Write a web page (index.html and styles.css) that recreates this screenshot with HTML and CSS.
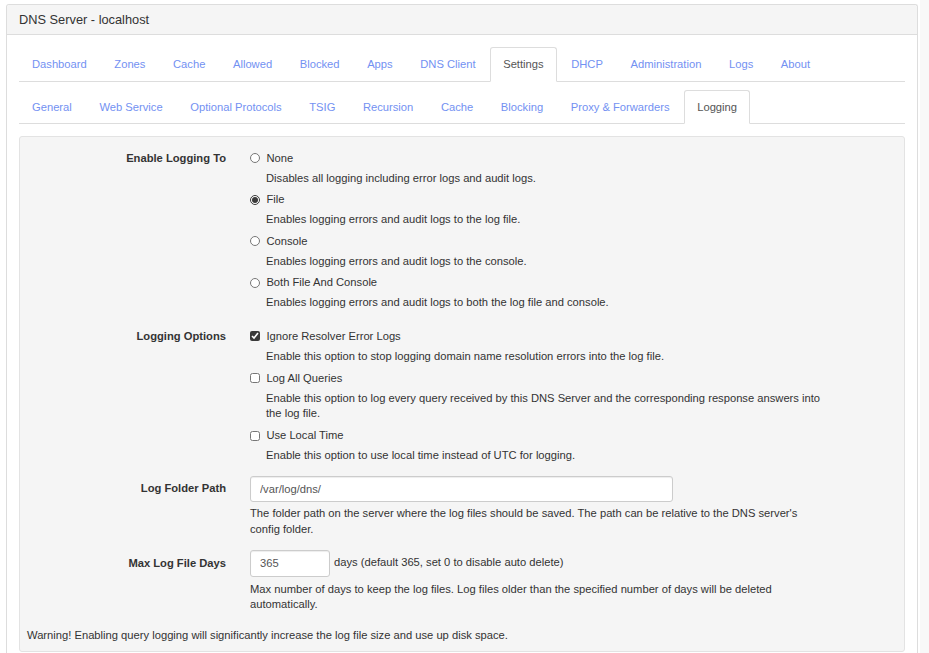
FILE: index.html
```html
<!DOCTYPE html>
<html lang="en">
<head>
<meta charset="utf-8">
<title>DNS Server - localhost</title>
<link rel="stylesheet" href="styles.css">
</head>
<body>
<div class="panel">
  <div class="panel-heading">DNS Server - localhost</div>
  <div class="panel-body">
    <ul class="nav-tabs main-tabs">
      <li><a>Dashboard</a></li>
      <li><a>Zones</a></li>
      <li><a>Cache</a></li>
      <li><a>Allowed</a></li>
      <li><a>Blocked</a></li>
      <li><a>Apps</a></li>
      <li><a>DNS Client</a></li>
      <li class="active"><a>Settings</a></li>
      <li><a>DHCP</a></li>
      <li><a>Administration</a></li>
      <li><a>Logs</a></li>
      <li><a>About</a></li>
    </ul>
    <ul class="nav-tabs sub-tabs">
      <li><a>General</a></li>
      <li><a>Web Service</a></li>
      <li><a>Optional Protocols</a></li>
      <li><a>TSIG</a></li>
      <li><a>Recursion</a></li>
      <li><a>Cache</a></li>
      <li><a>Blocking</a></li>
      <li><a>Proxy &amp; Forwarders</a></li>
      <li class="active"><a>Logging</a></li>
    </ul>
    <div class="well">
      <div class="form-group group-radio">
        <div class="label">Enable Logging To</div>
        <div class="controls">
          <div class="opt">
            <label class="opt-line"><input type="radio" name="log"> None</label>
            <div class="desc">Disables all logging including error logs and audit logs.</div>
          </div>
          <div class="opt">
            <label class="opt-line"><input type="radio" name="log" checked> File</label>
            <div class="desc">Enables logging errors and audit logs to the log file.</div>
          </div>
          <div class="opt">
            <label class="opt-line"><input type="radio" name="log"> Console</label>
            <div class="desc">Enables logging errors and audit logs to the console.</div>
          </div>
          <div class="opt">
            <label class="opt-line"><input type="radio" name="log"> Both File And Console</label>
            <div class="desc">Enables logging errors and audit logs to both the log file and console.</div>
          </div>
        </div>
      </div>
      <div class="form-group group-check">
        <div class="label">Logging Options</div>
        <div class="controls">
          <div class="opt">
            <label class="opt-line"><input type="checkbox" checked> Ignore Resolver Error Logs</label>
            <div class="desc">Enable this option to stop logging domain name resolution errors into the log file.</div>
          </div>
          <div class="opt">
            <label class="opt-line"><input type="checkbox"> Log All Queries</label>
            <div class="desc">Enable this option to log every query received by this DNS Server and the corresponding response answers into the log file.</div>
          </div>
          <div class="opt">
            <label class="opt-line"><input type="checkbox"> Use Local Time</label>
            <div class="desc">Enable this option to use local time instead of UTC for logging.</div>
          </div>
        </div>
      </div>
      <div class="form-group group-input group-path">
        <div class="label label-input">Log Folder Path</div>
        <div class="controls">
          <input class="text-input path-input" type="text" value="/var/log/dns/">
          <div class="help">The folder path on the server where the log files should be saved. The path can be relative to the DNS server's config folder.</div>
        </div>
      </div>
      <div class="form-group group-input group-days">
        <div class="label label-input days-label">Max Log File Days</div>
        <div class="controls">
          <div class="inline-row">
            <input class="text-input days-input" type="text" value="365">
            <span>days (default 365, set 0 to disable auto delete)</span>
          </div>
          <div class="help days-help">Max number of days to keep the log files. Log files older than the specified number of days will be deleted automatically.</div>
        </div>
      </div>
      <div class="warning">Warning! Enabling query logging will significantly increase the log file size and use up disk space.</div>
    </div>
  </div>
</div>
</body>
</html>
```
FILE: styles.css
```css
html {
  background: #ffffff;
}
body {
  margin: 0;
  font-family: "Liberation Sans", Arial, sans-serif;
  font-size: 11.2px;
  line-height: 15.5px;
  color: #333333;
  background: linear-gradient(to right, #ffffff 0, #ffffff 920px, #f8f8f8 920px);
  min-height: 653px;
}
.panel {
  margin: 4px 11px 0 6px;
  border: 1px solid #dddddd;
  border-bottom: none;
  border-radius: 3px 3px 0 0;
  background: #ffffff;
}
.panel-heading {
  height: 29px;
  display: flex;
  align-items: center;
  padding: 0 12px;
  background: #f5f5f5;
  border-bottom: 1px solid #dddddd;
  font-size: 12.8px;
  border-radius: 3px 3px 0 0;
}
.panel-body {
  padding: 12px 12px 3px;
}
.nav-tabs {
  display: flex;
  list-style: none;
  margin: 0;
  padding: 0;
  border-bottom: 1px solid #dddddd;
}
.nav-tabs li {
  margin-right: 1.6px;
  margin-bottom: -1px;
}
.nav-tabs a {
  display: block;
  padding: 8px 12px 9px;
  line-height: 16px;
  border: 1px solid transparent;
  border-radius: 3px 3px 0 0;
  color: #7391f2;
  cursor: pointer;
}
.nav-tabs li.active a {
  color: #555555;
  background: #ffffff;
  border-color: #dddddd;
  border-bottom-color: transparent;
}
.sub-tabs {
  margin-top: 8px;
}
.sub-tabs a {
  padding: 8px 12px;
}
.well {
  margin-top: 12px;
  background: #f5f5f5;
  border: 1px solid #e3e3e3;
  border-radius: 3px;
  padding: 13.5px 7px 7.5px;
}
.form-group {
  display: grid;
  grid-template-columns: 199px 1fr;
  column-gap: 24px;
}
.group-radio {
  margin-bottom: 18px;
}
.group-check {
  margin-bottom: 12.5px;
}
.group-path {
  margin-bottom: 12.5px;
}
.group-days {
  margin-bottom: 15px;
}
.label {
  text-align: right;
  font-weight: bold;
}
.label-input {
  padding-top: 5px;
}
.days-label {
  padding-top: 6.5px;
}
.controls {
  max-width: 578px;
}
.group-radio .opt + .opt {
  margin-top: 6px;
}
.group-check .opt + .opt {
  margin-top: 6.5px;
}
.opt-line {
  display: flex;
  align-items: center;
  gap: 6px;
}
.opt-line input {
  margin: 0;
  width: 10.4px;
  height: 10.4px;
  accent-color: #3a3a3a;
}
.desc {
  margin-top: 4.5px;
  padding-left: 16px;
}
.text-input {
  box-sizing: border-box;
  display: block;
  margin: 0;
  height: 26px;
  padding: 0 9px;
  border: 1px solid #cccccc;
  border-radius: 3px;
  background: #ffffff;
  box-shadow: inset 0 1px 1px rgba(0, 0, 0, 0.075);
  font-family: "Liberation Sans", Arial, sans-serif;
  font-size: 11.2px;
  color: #555555;
}
.path-input {
  width: 423px;
}
.days-input {
  width: 80px;
  height: 27px;
}
.inline-row {
  display: flex;
  align-items: center;
  gap: 4px;
}
.help {
  margin-top: 4px;
}
.days-help {
  margin-top: 5px;
}
.warning {
  margin-top: 0;
}
```
